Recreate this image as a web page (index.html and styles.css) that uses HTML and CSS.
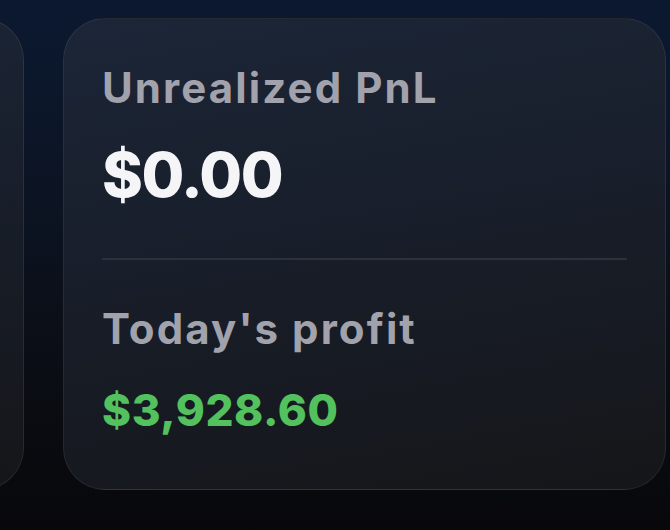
FILE: index.html
```html
<!DOCTYPE html>
<html lang="en">
<head>
<meta charset="utf-8">
<title>PnL</title>
<link rel="stylesheet" href="styles.css">
</head>
<body>
<main class="row">
  <section class="card card-prev" aria-hidden="true"></section>
  <section class="card">
    <div class="label">Unrealized PnL</div>
    <div class="value">$0.00</div>
    <hr class="divider">
    <div class="label label-second">Today's profit</div>
    <div class="value value-green">$3,928.60</div>
  </section>
</main>
</body>
</html>
```
FILE: styles.css
```css
html, body {
  margin: 0;
  padding: 0;
  height: 100%;
}
body {
  width: 670px;
  height: 530px;
  overflow: hidden;
  background: linear-gradient(180deg, #0b1930 0%, #0c1526 30%, #0b0e16 65%, #08080b 100%);
  font-family: Inter, "Open Sans", sans-serif;
}
.row {
  display: flex;
  justify-content: flex-end;
  gap: 39px;
  padding: 18px 4px 0 0;
}
.card {
  box-sizing: border-box;
  flex: 0 0 603px;
  height: 472px;
  border-radius: 42px;
  border: 1.5px solid rgba(255, 255, 255, 0.075);
  background: linear-gradient(170deg, #1c2638 0%, #181e2a 45%, #151619 100%);
  padding: 44px 38px 0 38px;
}
.card-prev {
  flex: 0 0 400px;
}
.label {
  font-size: 42px;
  line-height: 50px;
  font-weight: 700;
  color: #a2a2ad;
  letter-spacing: 2.1px;
}
.value {
  margin-top: 27px;
  font-size: 62px;
  line-height: 70px;
  font-weight: 800;
  color: #f5f5f7;
  letter-spacing: -1.5px;
}
.divider {
  margin: 48px 0 0 0;
  height: 2px;
  border: 0;
  background: #2d313a;
}
.label-second {
  margin-top: 44px;
}
.value-green {
  margin-top: 30px;
  font-size: 44px;
  line-height: 52px;
  color: #52c15e;
  letter-spacing: 0.6px;
}
```
